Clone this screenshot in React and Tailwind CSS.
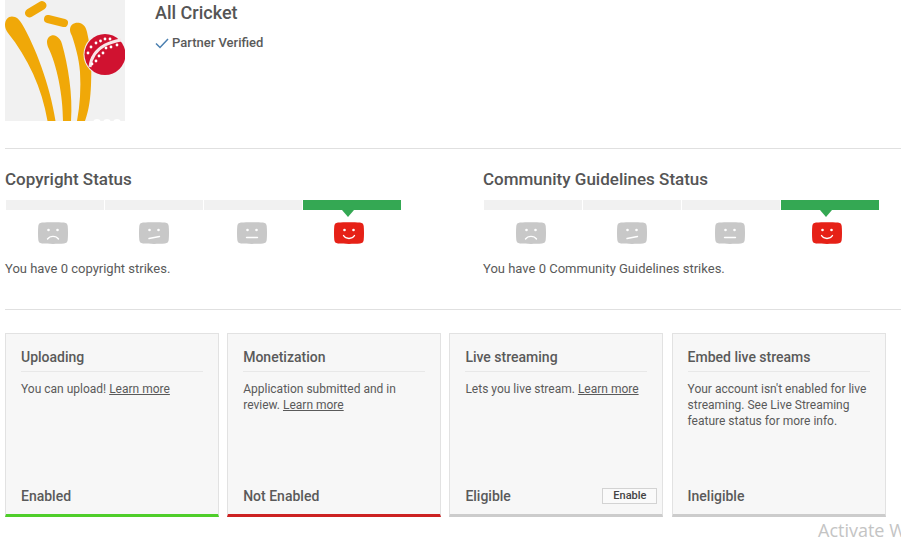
import React from "react";

function Logo() {
  const dots = [
    [88, 53], [91, 47], [96, 43], [100.500, 41], [105, 39], [110, 39],
    [92, 64], [96, 61], [99, 56], [103, 53], [106, 48], [111, 47], [117, 45],
  ];
  return (
    <svg width="120" height="121" viewBox="0 0 120 121" className="block bg-[#f1f1f1]">
      <g fill="#f0a808">
        <path d="M0 25 C0 18 5 15 10 17 C13 18 15 21 17 24 C30 46 45 85 50.500 121 L42.500 121 C37 88 23 58 3 33 C1 30 0 28 0 25 Z" />
        <path d="M42 42 C42 37 47 34 51 36 C54 38 56 40 57 44 C63 65 68 95 66 121 L58 121 C58 95 52 65 43 47 C42.500 45 42 44 42 42 Z" />
        <path d="M65 30 C65 24 70 22 75 23 C80 25 81 28 82 32 C86 50 87 62 86 85 C85.500 98 84 110 80 121 L72 121 C75 105 76 88 75 72 C74 58 70 45 67 36 C66 34 65 32 65 30 Z" />
      </g>
      <g stroke="#f0a808" fill="none" strokeLinecap="round">
        <path d="M24.500 13 L37 5.500" strokeWidth="9" />
        <path d="M43 19 L59 23" strokeWidth="8" />
      </g>
      <circle cx="100" cy="54.500" r="21.500" fill="#f1f1f1" />
      <circle cx="100" cy="54.500" r="20.500" fill="#d01230" />
      <path d="M85 67 C86 57 91 50 100 45 C105 42.500 111 41 116 40" stroke="#f8e6e8" strokeWidth="3" fill="none" />
      <g fill="#ffffff">
        {dots.map(([x, y], i) => (
          <circle key={i} cx={x - 5} cy={y} r="1.400" />
        ))}
      </g>
      <g fill="#ffffff">
        <circle cx="92" cy="123" r="4" />
        <circle cx="102" cy="123" r="4" />
        <circle cx="112" cy="123" r="4" />
      </g>
    </svg>
  );
}

function Face({ mouth, color }) {
  return (
    <svg width="30" height="22" viewBox="0 0 30 22" className="block">
      <path
        d="M4 0.500 C10 0 20 0 26 0.500 C28.500 0.800 29.500 2 29.700 4 C30.100 8 30.100 14 29.700 18 C29.500 20 28.500 21.200 26 21.500 C20 22 10 22 4 21.500 C1.500 21.200 0.500 20 0.300 18 C-0.100 14 -0.100 8 0.300 4 C0.500 2 1.500 0.800 4 0.500 Z"
        fill={color}
      />
      <circle cx="10.500" cy="8" r="1.300" fill="#fff" />
      <circle cx="19.500" cy="8" r="1.300" fill="#fff" />
      <path d={mouth} stroke="#fff" strokeWidth="1.400" fill="none" strokeLinecap="round" />
    </svg>
  );
}

const FACES = [
  { mouth: "M9.500 17 C12 13.500 18 13.500 20.500 17", ml: "ml-[33px]" },
  { mouth: "M10 16.500 L20.500 14.500", ml: "ml-[71px]" },
  { mouth: "M9.500 15.500 L20.500 15.500", ml: "ml-[68px]" },
  { mouth: "M9.500 13.500 C12 17.500 18 17.500 20.500 13.500", ml: "ml-[67px]" },
];

function Status({ title, text, className }) {
  return (
    <div className={className}>
      <h2 className="text-[17px] leading-[20px] font-medium text-[#555555] pt-[20px]">{title}</h2>
      <div className="flex gap-px ml-px mt-[11px]">
        <div className="w-[98px] h-[10px] bg-[#f1f1f1]" />
        <div className="w-[98px] h-[10px] bg-[#f1f1f1]" />
        <div className="w-[98px] h-[10px] bg-[#f1f1f1]" />
        <div className="relative w-[98px] h-[10px] bg-[#34a853]">
          <div className="absolute top-[10px] left-[39px] w-0 h-0 border-l-[6.5px] border-r-[6.5px] border-t-[7px] border-l-transparent border-r-transparent border-t-[#34a853]" />
        </div>
      </div>
      <div className="flex mt-[12px]">
        {FACES.map((f, i) => (
          <div key={i} className={f.ml}>
            <Face mouth={f.mouth} color={i === 3 ? "#e62117" : "#c8c8c8"} />
          </div>
        ))}
      </div>
      <p className="mt-[17px] text-[13px] leading-[16px] text-[#5a5a5a]">{text}</p>
    </div>
  );
}

function Learn() {
  return <a className="underline text-[#5a5a5a]">Learn more</a>;
}

function Card({ title, children, status, bar, action }) {
  return (
    <div className={`flex flex-col w-[214px] h-[184px] bg-[#f7f7f7] border border-[#e2e2e2] border-b-[3px] ${bar} pt-[14px] pb-[9px] pl-[15px] pr-[15px]`}>
      <h3 className="text-[14px] leading-[18px] font-medium text-[#5a5a5a] pb-[5px] border-b border-[#e8e8e8]">{title}</h3>
      <p className="mt-[9px] text-[12px] leading-[16px] text-[#5a5a5a]">{children}</p>
      <div className="mt-auto flex items-center justify-between">
        <span className="text-[14px] leading-[18px] font-medium text-[#5a5a5a]">{status}</span>
        {action}
      </div>
    </div>
  );
}

export default function App() {
  return (
    <div className="relative w-[901px] h-[541px] overflow-hidden bg-white pl-[5px] font-['Roboto',sans-serif]">
      <div className="flex h-[149px] border-b border-[#e0e0e0]">
        <Logo />
        <div className="ml-[30px]">
          <h1 className="mt-[2px] text-[18px] leading-[22px] font-medium text-[#555555]">All Cricket</h1>
          <div className="mt-[10px] flex items-center">
            <svg width="14" height="11" viewBox="0 0 14 11" className="block mr-[3px]">
              <path d="M1 5.500 L5 9.500 L13 1" stroke="#4a7fb0" strokeWidth="1.500" fill="none" />
            </svg>
            <span className="text-[13px] leading-[18px] font-medium text-[#5a5a5a]">Partner Verified</span>
          </div>
        </div>
      </div>
      <div className="flex h-[161px] border-b border-[#e0e0e0]">
        <Status className="w-[478px]" title="Copyright Status" text="You have 0 copyright strikes." />
        <Status title="Community Guidelines Status" text="You have 0 Community Guidelines strikes." />
      </div>
      <div className="flex gap-[8.200px] mt-[23px]">
        <Card title="Uploading" status="Enabled" bar="border-b-[#4fce2a]">
          You can upload! <Learn />
        </Card>
        <Card title="Monetization" status="Not Enabled" bar="border-b-[#cc2222]">
          Application submitted and in review. <Learn />
        </Card>
        <Card
          title="Live streaming"
          status="Eligible"
          bar="border-b-[#cccccc]"
          action={
            <button className="-mr-[10px] w-[55px] h-[16px] bg-[#fafafa] border border-[#d3d3d3] text-[11px] leading-[14px] font-medium text-[#444444]">
              Enable
            </button>
          }
        >
          Lets you live stream. <Learn />
        </Card>
        <Card title="Embed live streams" status="Ineligible" bar="border-b-[#cccccc]">
          Your account isn't enabled for live streaming. See Live Streaming feature status for more info.
        </Card>
      </div>
      <div className="absolute left-[818px] top-[518px] whitespace-nowrap font-['Open_Sans',sans-serif] text-[18px] leading-[25px] text-[#c4c4c4]">
        Activate Windows
      </div>
    </div>
  );
}
